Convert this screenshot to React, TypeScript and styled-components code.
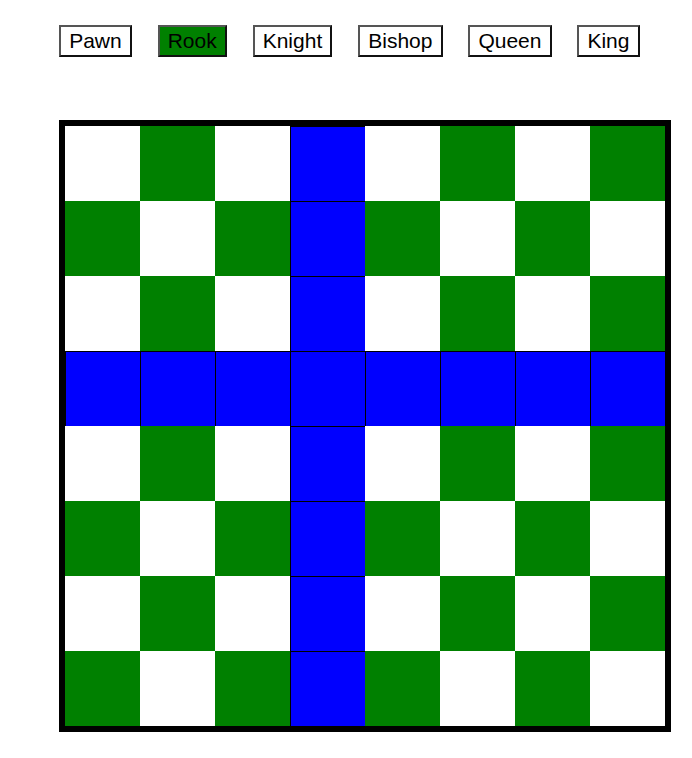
import React, { useState } from "react";
import styled, { createGlobalStyle } from "styled-components";

const GlobalStyle = createGlobalStyle`
  html, body { margin: 0; padding: 0; background: #ffffff; }
  body { font-family: "Liberation Sans", Arial, sans-serif; }
`;

const Page = styled.div`
  display: flex;
  flex-direction: column;
  align-items: flex-start;
  padding: 25px 0 0 59px;
`;

const Toolbar = styled.div`
  display: flex;
  gap: 25.6px;
  height: 32px;
`;

const PieceButton = styled.button<{ $active: boolean }>`
  box-sizing: border-box;
  height: 32px;
  padding: 0 8.2px;
  font-family: "Liberation Sans", Arial, sans-serif;
  font-size: 21px;
  color: #000;
  background: ${(p) => (p.$active ? "#008000" : "#ffffff")};
  border-style: solid;
  border-width: 2px;
  border-color: #555 #111 #111 #555;
  border-radius: 0;
  cursor: pointer;
`;

const Board = styled.div`
  margin-top: 63px;
  display: grid;
  grid-template-columns: repeat(8, 75px);
  grid-template-rows: repeat(8, 75px);
  border: 6px solid #000;
`;

const Cell = styled.div<{ $tone: "light" | "dark" | "hit" }>`
  background: ${(p) =>
    p.$tone === "hit" ? "#0000ff" : p.$tone === "dark" ? "#008000" : "#ffffff"};
  box-shadow: ${(p) => (p.$tone === "hit" ? "inset 1px 1px 0 #000" : "none")};
`;

const pieces = ["Pawn", "Rook", "Knight", "Bishop", "Queen", "King"];

export default function App() {
  const [active, setActive] = useState("Rook");
  const pr = 3;
  const pc = 3;
  const cells = [];
  for (let r = 0; r < 8; r++) {
    for (let c = 0; c < 8; c++) {
      const hit = active === "Rook" && (r === pr || c === pc);
      const tone = hit ? "hit" : (r + c) % 2 === 1 ? "dark" : "light";
      cells.push(<Cell key={`${r}-${c}`} $tone={tone} />);
    }
  }
  return (
    <>
      <GlobalStyle />
      <Page>
        <Toolbar>
          {pieces.map((p) => (
            <PieceButton key={p} $active={p === active} onClick={() => setActive(p)}>
              {p}
            </PieceButton>
          ))}
        </Toolbar>
        <Board>{cells}</Board>
      </Page>
    </>
  );
}
